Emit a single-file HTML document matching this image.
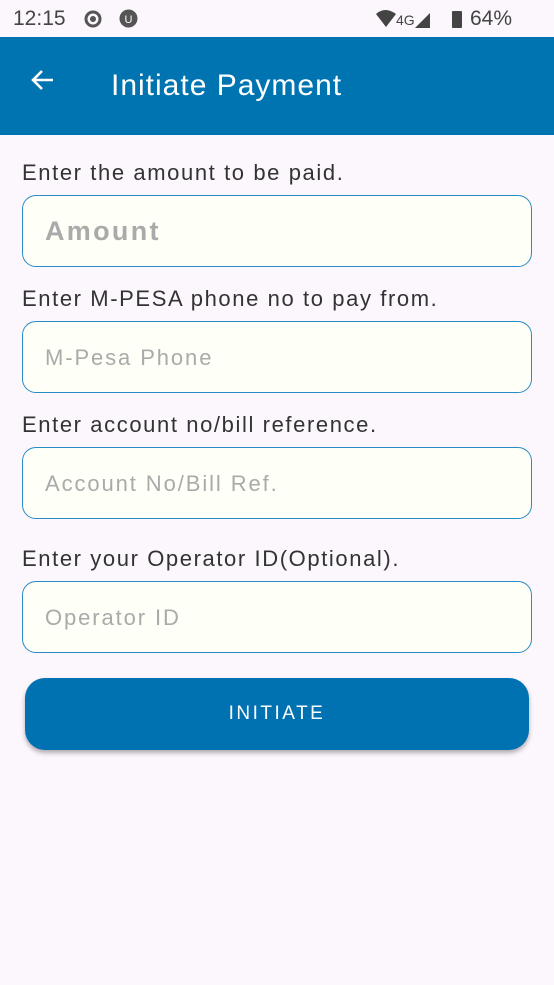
<!DOCTYPE html>
<html><head><style>
body{margin:0;width:554px;height:985px;background:#fcf6fd;font-family:"Liberation Sans",sans-serif;position:relative;overflow:hidden}
.sb{position:absolute;top:0;left:0;width:554px;height:37px;background:#fcf6fd;border-bottom:1px solid #ddd}
.hdr{position:absolute;top:37px;left:0;width:554px;height:98px;background:#0074b1}
.t{position:absolute;left:111px;top:69px;color:#fff;font-size:30px;letter-spacing:1px}
.lbl{position:absolute;left:22px;font-size:22px;color:#333;letter-spacing:1.6px}
.in{position:absolute;left:22px;height:72px;border:1.5px solid #2a8cc4;border-radius:14px;background:#fefff6;box-sizing:border-box;width:510px}
.ph{position:absolute;left:22px;top:23px;font-size:22px;color:#aaa;letter-spacing:1.9px}
.btn{position:absolute;left:25px;top:678px;width:504px;height:72px;border-radius:20px;background:#0072b1;box-shadow:0 3px 5px rgba(0,0,0,.3);color:#fff;text-align:center;line-height:72px;font-size:19px;letter-spacing:2.5px}
</style></head><body>
<div class="sb">
<span style="position:absolute;left:13px;top:7px;font-size:21px;color:#444">12:15</span>
<svg style="position:absolute;left:82px;top:8px" width="22" height="22"><circle cx="11" cy="11" r="7" fill="none" stroke="#555" stroke-width="3"/><circle cx="11" cy="11" r="3" fill="#555"/></svg>
<svg style="position:absolute;left:119px;top:9px" width="19" height="19"><circle cx="9.5" cy="9.5" r="9" fill="#555"/><text x="9.5" y="14" font-size="11" fill="#fff" text-anchor="middle" font-family="Liberation Sans">U</text></svg>
<svg style="position:absolute;left:374px;top:8px" width="100" height="22"><path d="M2 6 Q11 -2 22 6 L12 19Z" fill="#444"/><text x="22" y="17" font-size="14" fill="#444" font-family="Liberation Sans">4G</text><path d="M41 20 L56 5 L56 20Z" fill="#444"/><rect x="78" y="3" width="10" height="17" rx="1" fill="#444"/></svg>
<span style="position:absolute;left:470px;top:7px;font-size:21px;color:#444">64%</span>
</div>
<div class="hdr"></div>
<svg style="position:absolute;left:30px;top:68px" width="26" height="26"><path d="M23 12H4M12 3L3 12L12 21" stroke="#fff" stroke-width="2.6" fill="none"/></svg>
<div class="t">Initiate Payment</div>
<div class="lbl" style="top:160px">Enter the amount to be paid.</div>
<div class="in" style="top:195px"><div class="ph" style="font-weight:bold;font-size:27px;top:20px;letter-spacing:2.3px">Amount</div></div>
<div class="lbl" style="top:286px">Enter M-PESA phone no to pay from.</div>
<div class="in" style="top:321px"><div class="ph">M-Pesa Phone</div></div>
<div class="lbl" style="top:412px">Enter account no/bill reference.</div>
<div class="in" style="top:447px"><div class="ph">Account No/Bill Ref.</div></div>
<div class="lbl" style="top:546px">Enter your Operator ID(Optional).</div>
<div class="in" style="top:581px"><div class="ph">Operator ID</div></div>
<div class="btn">INITIATE</div>
</body></html>
